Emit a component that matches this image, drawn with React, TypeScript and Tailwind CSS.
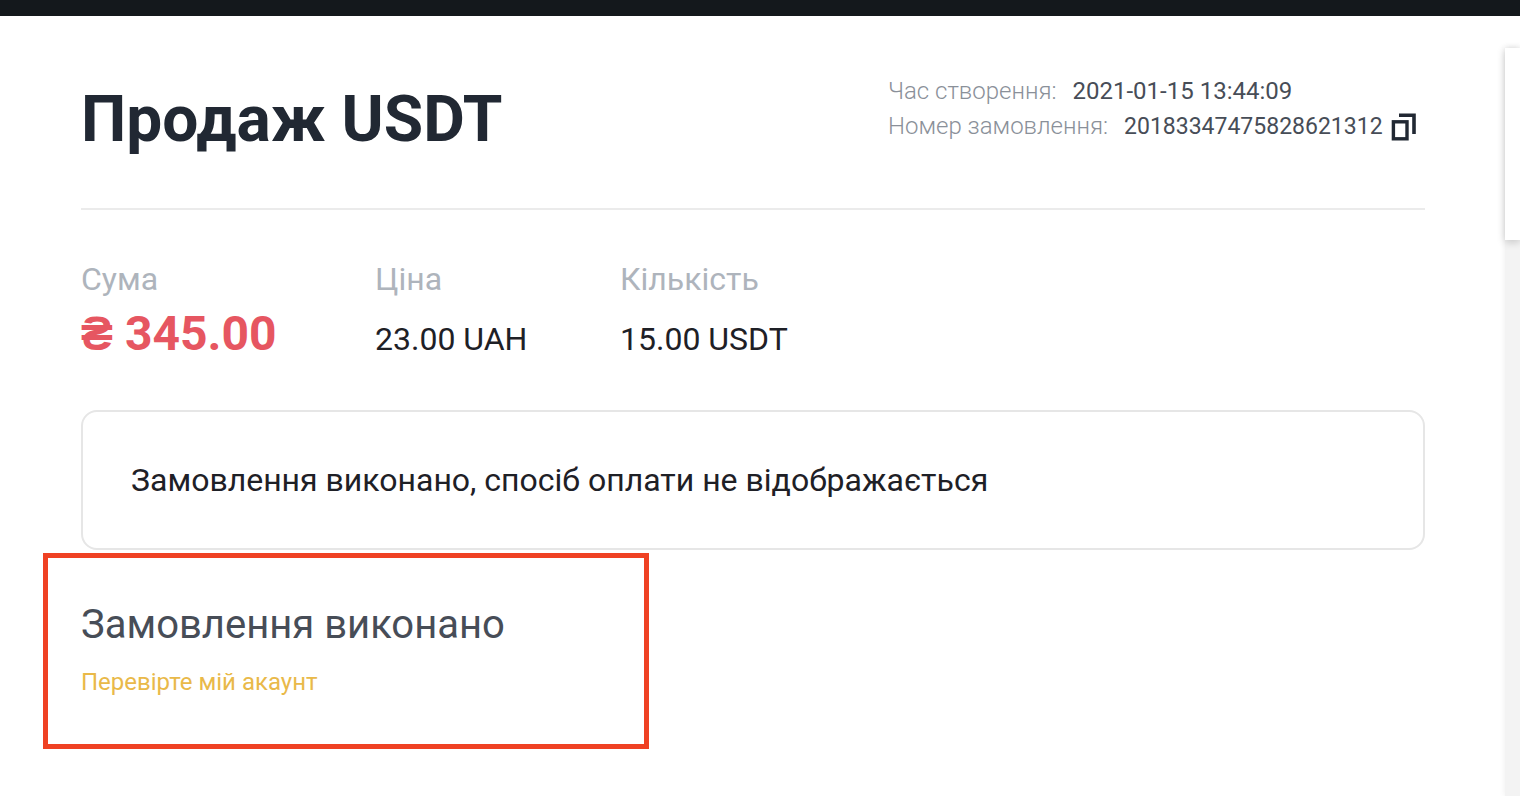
import { useState } from "react";

const ORDER = {
  title: "Продаж USDT",
  createdAt: "2021-01-15 13:44:09",
  number: "20183347475828621312",
  total: "₴ 345.00",
  price: "23.00 UAH",
  quantity: "15.00 USDT",
};

export default function App() {
  return (
    <div className="flex min-h-screen flex-col bg-white font-[Roboto,sans-serif] text-[#1e2026]">
      <div className="h-4 bg-[#14181c]" />
      <div className="flex flex-1">
        <main className="min-w-0 flex-1 pr-20 pb-10 pl-[81px]">
          <OrderHeader />
          <OrderSummary />
          <div className="mt-8 rounded-2xl border-2 border-[#e6e6e6] px-12 py-12">
            <p className="text-[32px] leading-10">
              Замовлення виконано, спосіб оплати не відображається
            </p>
          </div>
          <OrderStatus />
        </main>
        <ChatEdge />
      </div>
    </div>
  );
}

function OrderHeader() {
  return (
    <header className="flex items-start justify-between border-b-2 border-[#ebebeb] pt-[58px] pb-[42px]">
      <h1 className="text-[64px] leading-[92px] font-bold text-[#212833]">
        {ORDER.title}
      </h1>
      <dl className="w-[537px] text-2xl leading-[35px] whitespace-nowrap text-[#8a9099]">
        <div className="flex gap-4">
          <dt className="font-light">Час створення:</dt>
          <dd className="text-[#474d57]">{ORDER.createdAt}</dd>
        </div>
        <div className="flex gap-4">
          <dt className="font-light">Номер замовлення:</dt>
          <dd className="flex items-center gap-2 text-[23px] text-[#474d57]">
            {ORDER.number}
            <CopyButton value={ORDER.number} />
          </dd>
        </div>
      </dl>
    </header>
  );
}

function CopyButton({ value }: { value: string }) {
  const [copied, setCopied] = useState(false);

  const onCopy = () => {
    navigator.clipboard?.writeText(value);
    setCopied(true);
  };

  return (
    <button
      type="button"
      aria-label="Копіювати"
      aria-pressed={copied}
      onClick={onCopy}
      className="cursor-pointer text-[#212833]"
    >
      <svg width="26" height="28" viewBox="0 0 26 28" fill="none">
        <path d="M8 2.2H23V21" stroke="currentColor" strokeWidth="3.6" />
        <rect
          x="2.4"
          y="8.8"
          width="13.6"
          height="17"
          stroke="currentColor"
          strokeWidth="3.4"
        />
      </svg>
    </button>
  );
}

function OrderSummary() {
  return (
    <dl className="mt-12 flex text-[32px]">
      <div className="w-[294px]">
        <dt className="leading-[42px] text-[#aeb4bc]">Сума</dt>
        <dd className="text-5xl leading-[68px] font-bold text-[#e65661]">
          {ORDER.total}
        </dd>
      </div>
      <div className="w-[245px]">
        <dt className="leading-[42px] text-[#aeb4bc]">Ціна</dt>
        <dd className="leading-[78px]">{ORDER.price}</dd>
      </div>
      <div>
        <dt className="leading-[42px] text-[#aeb4bc]">Кількість</dt>
        <dd className="leading-[78px]">{ORDER.quantity}</dd>
      </div>
    </dl>
  );
}

function OrderStatus() {
  return (
    <section className="mt-[3px] -ml-[38px] max-w-[606px] border-[5px] border-[#ef4123] px-[33px] pt-10 pb-11">
      <h2 className="text-[40px] leading-[54px] text-[#474d57]">
        Замовлення виконано
      </h2>
      <a
        href="#account"
        className="mt-3 block text-2xl leading-9 text-[#e9b949]"
      >
        Перевірте мій акаунт
      </a>
    </section>
  );
}

// Left edge of the chat panel docked to the right of the order
function ChatEdge() {
  return (
    <aside className="w-[15px] shrink-0 pt-8">
      <div className="flex h-full flex-col bg-[#f3f3f3] shadow-[0_0_6px_rgba(0,0,0,0.08)]">
        <div className="h-48 bg-white shadow-[0_2px_8px_rgba(0,0,0,0.2)]" />
      </div>
    </aside>
  );
}
